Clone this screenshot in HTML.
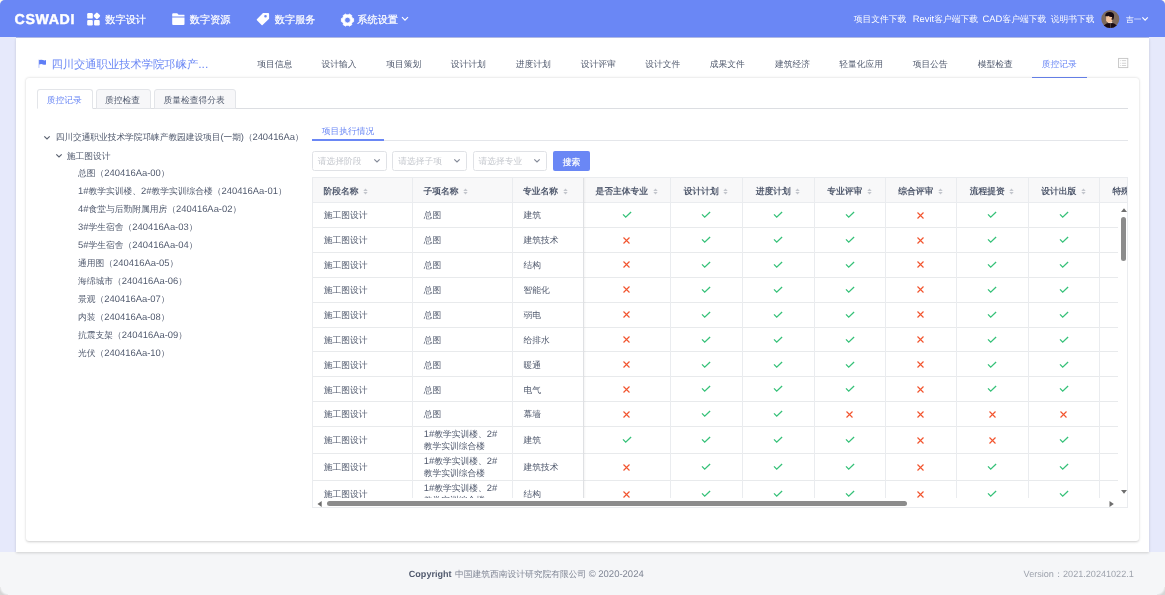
<!DOCTYPE html><html><head><meta charset="utf-8"><style>
*{box-sizing:border-box}
html,body{margin:0;padding:0}
body{width:1165px;height:595px;overflow:hidden;position:relative;background:#f5f6f8;font-family:"Liberation Sans",sans-serif;text-rendering:geometricPrecision}
#wrap{position:absolute;left:0;top:0;width:1165px;height:595px;will-change:transform}
.t{position:absolute;white-space:nowrap;line-height:20px;height:20px}
.ic{position:absolute;display:block}
#hdr{position:absolute;left:0;top:0;width:1165px;height:37px;background:#6a87f5;border-radius:5px 5px 0 0;box-shadow:0 0.5px 1px rgba(40,70,200,0.35)}
#main{position:absolute;left:16px;top:37.5px;width:1133px;height:514.3px;background:#fff;box-shadow:0 0.5px 2.5px rgba(0,0,0,0.16)}
#card{position:absolute;left:26px;top:78px;width:1112.5px;height:462.5px;background:#fff;border-radius:3px;box-shadow:0 0.5px 2.5px rgba(0,0,0,0.2)}
.tab{position:absolute;top:89.2px;height:19.4px;background:#f7f7f9;border:1px solid #e3e5e9;border-radius:3px 3px 0 0}
.sel{position:absolute;top:151.3px;width:74.5px;height:19.5px;border:1px solid #e0e2e6;border-radius:2.5px;background:#fff}
.th{position:absolute;top:3px;height:20px;line-height:20px;white-space:nowrap;font-size:8.75px;font-weight:600;color:#515a6e}
.srt{display:inline-block;width:5px;height:7px;margin-left:4.6px;vertical-align:-0.5px}
.td{position:absolute;height:20px;line-height:20px;white-space:nowrap;font-size:8.75px;color:#515a6e}
.td2{position:absolute;height:25px;line-height:12.5px;white-space:nowrap;font-size:8.75px;color:#515a6e}
.mkw{position:absolute;width:10px;height:9px}
.mk{display:block}
</style></head><body><div id="wrap"><div style="position:absolute;left:0;top:0;width:8px;height:8px;background:#fffdf0"></div>
<div style="position:absolute;left:1157px;top:0;width:8px;height:8px;background:#fffdf0"></div>
<div id="hdr"></div>
<div class="t" style="left:14.6px;top:10px;font-size:14.2px;font-weight:bold;color:#fff;letter-spacing:0.6px;-webkit-text-stroke:0.45px #fff">CSWADI</div>
<svg class="ic" style="left:86px;top:12px" width="16" height="15" viewBox="0 0 16 15">
<rect x="1.2" y="1" width="5.6" height="5.6" rx="1.2" fill="#fff"/>
<rect x="1.2" y="7.9" width="5.6" height="5.6" rx="1.2" fill="#fff"/>
<rect x="8.1" y="7.9" width="5.6" height="5.6" rx="1.2" fill="#fff"/>
<rect x="8.3" y="1.3" width="5.2" height="5.2" rx="1.1" fill="#fff" transform="rotate(45 10.9 3.9)"/>
</svg>
<div class="t" style="left:105.3px;top:10.600000000000001px;font-size:10.2px;color:#fff;font-weight:normal;-webkit-text-stroke:0.2px #fff">数字设计</div>
<svg class="ic" style="left:168px;top:8px" width="22" height="22" viewBox="0 0 22 22">
<path d="M4.2 6.3 Q4.2 5.2 5.3 5.2 H9.2 L10.6 6.8 H16.3 Q16.5 6.8 16.5 7.2 V8.6 H4.2 Z" fill="#fff"/>
<path d="M4.2 9.4 H16.5 V16 Q16.5 17 15.5 17 H5.2 Q4.2 17 4.2 16 Z" fill="#fff"/>
</svg>
<div class="t" style="left:189.8px;top:10.600000000000001px;font-size:10.2px;color:#fff;font-weight:normal;-webkit-text-stroke:0.2px #fff">数字资源</div>
<svg class="ic" style="left:252px;top:8px" width="22" height="22" viewBox="0 0 22 22">
<path d="M11 5 H16.2 Q17.1 5 17.1 5.9 V10.7 L10.6 17 Q10.1 17.4 9.6 17 L4.9 12.2 Q4.5 11.7 4.9 11.2 Z M13.5 7 A1.3 1.3 0 1 0 13.5 9.6 A1.3 1.3 0 1 0 13.5 7 Z" fill="#fff" fill-rule="evenodd"/>
</svg>
<div class="t" style="left:274.8px;top:10.600000000000001px;font-size:10.2px;color:#fff;font-weight:normal;-webkit-text-stroke:0.2px #fff">数字服务</div>
<svg class="ic" style="left:336px;top:8px" width="22" height="22" viewBox="0 0 22 22"><path d="M17.61 10.58 L17.61 13.62 L16.45 14.00 L15.62 15.44 L15.88 16.63 L13.24 18.16 L12.33 17.33 L10.67 17.33 L9.76 18.16 L7.12 16.63 L7.38 15.44 L6.55 14.00 L5.39 13.62 L5.39 10.58 L6.55 10.20 L7.38 8.76 L7.12 7.57 L9.76 6.04 L10.67 6.87 L12.33 6.87 L13.24 6.04 L15.88 7.57 L15.62 8.76 L16.45 10.20 Z M14.40 12.1 A2.9 2.9 0 1 0 8.60 12.1 A2.9 2.9 0 1 0 14.40 12.1 Z" fill="#fff" fill-rule="evenodd" stroke="#fff" stroke-width="0.8" stroke-linejoin="round"/></svg>
<div class="t" style="left:357.3px;top:10.600000000000001px;font-size:10.2px;color:#fff;font-weight:normal;-webkit-text-stroke:0.2px #fff">系统设置</div>
<svg class="ic" style="left:401px;top:16px" width="8" height="6" viewBox="0 0 8 6"><path d="M1 1.2 L4 4.2 L7 1.2" fill="none" stroke="#fff" stroke-width="1.2"/></svg>
<div class="t" style="left:853.8px;top:8.899999999999999px;font-size:8.75px;color:#fff;font-weight:normal;">项目文件下载</div>
<div class="t" style="left:912.8px;top:8.899999999999999px;font-size:8.75px;color:#fff;font-weight:normal;"><span style="font-size:9.41px">Revit</span>客户端下载</div>
<div class="t" style="left:982.5px;top:8.899999999999999px;font-size:8.75px;color:#fff;font-weight:normal;"><span style="font-size:9.41px">CAD</span>客户端下载</div>
<div class="t" style="left:1050.8px;top:8.899999999999999px;font-size:8.75px;color:#fff;font-weight:normal;">说明书下载</div>
<svg class="ic" style="left:1101px;top:10px" width="19" height="19" viewBox="0 0 19 19">
<defs><clipPath id="cav"><circle cx="9.3" cy="9.1" r="9"/></clipPath></defs>
<circle cx="9.3" cy="9.1" r="9" fill="#7d6a5d"/>
<g clip-path="url(#cav)">
<path d="M1.5 19.5 Q2 15 5.5 13.6 Q7.5 12.8 9.3 12.8 Q11.3 12.8 13.2 13.6 Q16.6 15 17.2 19.5 Z" fill="#1b0c14"/>
<rect x="9.1" y="13.2" width="0.6" height="6" fill="#6e6058"/>
<rect x="7.2" y="11.8" width="4" height="1.3" fill="#efe9e2"/>
<path d="M5.1 6 V10.6 Q5.3 12.4 7.5 12.4 L9.8 12.4 Q11 12.2 11.2 10.8 L11.4 6.5 Z" fill="#f3c29c"/>
<path d="M4.2 5.4 Q4.4 2.1 8.6 2 Q12.9 1.9 13.1 5.6 Q13 7.9 12.3 9.6 L11.2 9.2 L11.1 7.1 Q8.6 7.3 7.6 5.8 Q6.3 6.6 4.4 6.2 Z" fill="#150911"/>
<path d="M10.6 8 Q11.8 8 11.9 9 Q11.7 10 10.7 9.9 Z" fill="#2a1a1a"/>
</g></svg>
<div class="t" style="left:1125.9px;top:9.899999999999999px;font-size:7.75px;color:#fff;font-weight:normal;">吉一</div>
<svg class="ic" style="left:1141.4px;top:16px" width="8" height="6" viewBox="0 0 8 6"><path d="M1.4 1.4 L4.1 4.1 L6.8 1.4" fill="none" stroke="#fff" stroke-width="1.2"/></svg>
<div style="position:absolute;left:0;top:37px;width:16px;height:515px;background:#e6e9fb"></div>
<div style="position:absolute;left:1149px;top:37px;width:16px;height:515px;background:#e6e9fb"></div>
<div id="main"></div>
<svg class="ic" style="left:37px;top:58px" width="10" height="11" viewBox="0 0 10 11">
<rect x="1.5" y="1.6" width="0.9" height="8.3" fill="#b4c1f8"/>
<path d="M2.1 2.0 Q4.5 1.3 6 2.1 Q7.6 2.8 9 2.1 V6.4 Q7.6 7.1 6 6.4 Q4.5 5.7 2.1 6.4 Z" fill="#5f7ef6"/>
</svg>
<div class="t" style="left:51.4px;top:53.6px;font-size:11.3px;color:#6a87f5;font-weight:normal;">四川交通职业技术学院邛崃产<span style="font-size:12.15px">...</span></div>
<div class="t" style="left:257.15px;top:53.5px;font-size:8.75px;color:#515a6e;font-weight:normal;">项目信息</div>
<div class="t" style="left:321.54999999999995px;top:53.5px;font-size:8.75px;color:#515a6e;font-weight:normal;">设计输入</div>
<div class="t" style="left:386.34999999999997px;top:53.5px;font-size:8.75px;color:#515a6e;font-weight:normal;">项目策划</div>
<div class="t" style="left:450.65px;top:53.5px;font-size:8.75px;color:#515a6e;font-weight:normal;">设计计划</div>
<div class="t" style="left:515.65px;top:53.5px;font-size:8.75px;color:#515a6e;font-weight:normal;">进度计划</div>
<div class="t" style="left:580.65px;top:53.5px;font-size:8.75px;color:#515a6e;font-weight:normal;">设计评审</div>
<div class="t" style="left:645.15px;top:53.5px;font-size:8.75px;color:#515a6e;font-weight:normal;">设计文件</div>
<div class="t" style="left:709.65px;top:53.5px;font-size:8.75px;color:#515a6e;font-weight:normal;">成果文件</div>
<div class="t" style="left:774.9499999999999px;top:53.5px;font-size:8.75px;color:#515a6e;font-weight:normal;">建筑经济</div>
<div class="t" style="left:839.35px;top:53.5px;font-size:8.75px;color:#515a6e;font-weight:normal;">轻量化应用</div>
<div class="t" style="left:912.65px;top:53.5px;font-size:8.75px;color:#515a6e;font-weight:normal;">项目公告</div>
<div class="t" style="left:977.65px;top:53.5px;font-size:8.75px;color:#515a6e;font-weight:normal;">模型检查</div>
<div class="t" style="left:1041.8500000000001px;top:53.5px;font-size:8.75px;color:#6a87f5;font-weight:normal;">质控记录</div>
<div style="position:absolute;left:1032px;top:77px;width:55px;height:1.6px;background:#6a87f5"></div>
<svg class="ic" style="left:1117px;top:57px" width="12" height="12" viewBox="0 0 12 12">
<rect x="1.6" y="1.4" width="9.2" height="9.2" fill="none" stroke="#c3c3c3" stroke-width="0.9"/>
<rect x="3.2" y="3.3" width="0.9" height="0.8" fill="#d0d0d0"/><rect x="4.9" y="3.3" width="4.2" height="0.8" fill="#c8c8c8"/>
<rect x="3.2" y="5.8" width="0.9" height="0.8" fill="#d0d0d0"/><rect x="4.9" y="5.8" width="4.2" height="0.8" fill="#c8c8c8"/>
<rect x="3.2" y="8.1" width="0.9" height="0.8" fill="#d0d0d0"/><rect x="4.9" y="8.1" width="4.2" height="0.8" fill="#c8c8c8"/>
</svg>
<div id="card"></div>
<div style="position:absolute;left:37px;top:108px;width:1091px;height:1px;background:#dcdee2"></div>
<div class="tab" style="left:36.8px;width:55.8px;background:#fff;border-bottom-color:#fff"></div>
<div class="tab" style="left:95.6px;width:55.3px"></div>
<div class="tab" style="left:154.2px;width:81.5px"></div>
<div class="t" style="left:46.7px;top:89.7px;font-size:8.75px;color:#6a87f5;font-weight:normal;">质控记录</div>
<div class="t" style="left:105px;top:89.7px;font-size:8.75px;color:#515a6e;font-weight:normal;">质控检查</div>
<div class="t" style="left:163.4px;top:89.7px;font-size:8.75px;color:#515a6e;font-weight:normal;">质量检查得分表</div>
<svg class="ic" style="left:43.3px;top:135.2px" width="8" height="6" viewBox="0 0 8 6"><path d="M1.3 1.3 L4 4 L6.7 1.3" fill="none" stroke="#5b6270" stroke-width="1.15"/></svg>
<div class="t" style="left:55.7px;top:127.30000000000001px;font-size:8.75px;color:#515a6e;font-weight:normal;letter-spacing:-0.08px">四川交通职业技术学院邛崃产教园建设项目<span style="font-size:9.41px">(</span>一期<span style="font-size:9.41px">)</span>（<span style="font-size:9.41px">240416Aa</span>）</div>
<svg class="ic" style="left:54.8px;top:153px" width="8" height="6" viewBox="0 0 8 6"><path d="M1.3 1.3 L4 4 L6.7 1.3" fill="none" stroke="#5b6270" stroke-width="1.15"/></svg>
<div class="t" style="left:66.8px;top:145.5px;font-size:8.75px;color:#515a6e;font-weight:normal;">施工图设计</div>
<div class="t" style="left:78px;top:163.2px;font-size:8.75px;color:#515a6e;font-weight:normal;">总图（<span style="font-size:9.41px">240416Aa-00</span>）</div>
<div class="t" style="left:78px;top:181.2px;font-size:8.75px;color:#515a6e;font-weight:normal;"><span style="font-size:9.41px">1#</span>教学实训楼、<span style="font-size:9.41px">2#</span>教学实训综合楼（<span style="font-size:9.41px">240416Aa-01</span>）</div>
<div class="t" style="left:78px;top:199.2px;font-size:8.75px;color:#515a6e;font-weight:normal;"><span style="font-size:9.41px">4#</span>食堂与后勤附属用房（<span style="font-size:9.41px">240416Aa-02</span>）</div>
<div class="t" style="left:78px;top:217.2px;font-size:8.75px;color:#515a6e;font-weight:normal;"><span style="font-size:9.41px">3#</span>学生宿舍（<span style="font-size:9.41px">240416Aa-03</span>）</div>
<div class="t" style="left:78px;top:235.2px;font-size:8.75px;color:#515a6e;font-weight:normal;"><span style="font-size:9.41px">5#</span>学生宿舍（<span style="font-size:9.41px">240416Aa-04</span>）</div>
<div class="t" style="left:78px;top:253.2px;font-size:8.75px;color:#515a6e;font-weight:normal;">通用图（<span style="font-size:9.41px">240416Aa-05</span>）</div>
<div class="t" style="left:78px;top:271.2px;font-size:8.75px;color:#515a6e;font-weight:normal;">海绵城市（<span style="font-size:9.41px">240416Aa-06</span>）</div>
<div class="t" style="left:78px;top:289.2px;font-size:8.75px;color:#515a6e;font-weight:normal;">景观（<span style="font-size:9.41px">240416Aa-07</span>）</div>
<div class="t" style="left:78px;top:307.2px;font-size:8.75px;color:#515a6e;font-weight:normal;">内装（<span style="font-size:9.41px">240416Aa-08</span>）</div>
<div class="t" style="left:78px;top:325.2px;font-size:8.75px;color:#515a6e;font-weight:normal;">抗震支架（<span style="font-size:9.41px">240416Aa-09</span>）</div>
<div class="t" style="left:78px;top:343.2px;font-size:8.75px;color:#515a6e;font-weight:normal;">光伏（<span style="font-size:9.41px">240416Aa-10</span>）</div>
<div class="t" style="left:321.8px;top:120.80000000000001px;font-size:8.75px;color:#6a87f5;font-weight:normal;">项目执行情况</div>
<div style="position:absolute;left:312px;top:140.3px;width:816px;height:1px;background:#e4e6ea"></div>
<div style="position:absolute;left:312px;top:139.3px;width:72px;height:1.7px;background:#6a87f5"></div>
<div class="sel" style="left:312px"></div>
<div class="t" style="left:317.8px;top:151px;font-size:8.75px;color:#c5c8ce;font-weight:normal;">请选择阶段</div>
<svg class="ic" style="left:372.8px;top:158.1px" width="8" height="6" viewBox="0 0 8 6"><path d="M1.3 1.3 L4 4 L6.7 1.3" fill="none" stroke="#858b99" stroke-width="1.2"/></svg>
<div class="sel" style="left:392.4px"></div>
<div class="t" style="left:398.2px;top:151px;font-size:8.75px;color:#c5c8ce;font-weight:normal;">请选择子项</div>
<svg class="ic" style="left:453.2px;top:158.1px" width="8" height="6" viewBox="0 0 8 6"><path d="M1.3 1.3 L4 4 L6.7 1.3" fill="none" stroke="#858b99" stroke-width="1.2"/></svg>
<div class="sel" style="left:472.6px"></div>
<div class="t" style="left:478.40000000000003px;top:151px;font-size:8.75px;color:#c5c8ce;font-weight:normal;">请选择专业</div>
<svg class="ic" style="left:533.4px;top:158.1px" width="8" height="6" viewBox="0 0 8 6"><path d="M1.3 1.3 L4 4 L6.7 1.3" fill="none" stroke="#858b99" stroke-width="1.2"/></svg>
<div style="position:absolute;left:552.8px;top:151.3px;width:37px;height:19.5px;background:#6a87f5;border-radius:2px"></div>
<div class="t" style="left:562.8px;top:151.9px;font-size:8.75px;color:#fff;font-weight:normal;-webkit-text-stroke:0.2px #fff">搜索</div>
<div style="position:absolute;left:312px;top:177px;width:815px;height:329.5px;border:1px solid #e8eaec;border-radius:0"></div>
<div style="position:absolute;left:313px;top:178px;width:814px;height:24px;overflow:hidden;background:#f8f8f9">
<div style="position:absolute;left:99px;top:0px;width:1px;height:24px;background:#eaecef"></div>
<div style="position:absolute;left:198.5px;top:0px;width:1px;height:24px;background:#eaecef"></div>
<div style="position:absolute;left:270px;top:0px;width:1px;height:24px;background:#eaecef"></div>
<div style="position:absolute;left:357px;top:0px;width:1px;height:24px;background:#eaecef"></div>
<div style="position:absolute;left:429px;top:0px;width:1px;height:24px;background:#eaecef"></div>
<div style="position:absolute;left:501px;top:0px;width:1px;height:24px;background:#eaecef"></div>
<div style="position:absolute;left:572px;top:0px;width:1px;height:24px;background:#eaecef"></div>
<div style="position:absolute;left:643px;top:0px;width:1px;height:24px;background:#eaecef"></div>
<div style="position:absolute;left:715px;top:0px;width:1px;height:24px;background:#eaecef"></div>
<div style="position:absolute;left:786px;top:0px;width:1px;height:24px;background:#eaecef"></div>
<div class="th" style="left:10.5px">阶段名称<svg class="srt" width="5" height="7" viewBox="0 0 5 7"><path d="M0.3 2.9 L2.5 0.5 L4.7 2.9 Z M0.3 4.1 L4.7 4.1 L2.5 6.5 Z" fill="#c3c6cd"/></svg></div>
<div class="th" style="left:110.5px">子项名称<svg class="srt" width="5" height="7" viewBox="0 0 5 7"><path d="M0.3 2.9 L2.5 0.5 L4.7 2.9 Z M0.3 4.1 L4.7 4.1 L2.5 6.5 Z" fill="#c3c6cd"/></svg></div>
<div class="th" style="left:210.0px">专业名称<svg class="srt" width="5" height="7" viewBox="0 0 5 7"><path d="M0.3 2.9 L2.5 0.5 L4.7 2.9 Z M0.3 4.1 L4.7 4.1 L2.5 6.5 Z" fill="#c3c6cd"/></svg></div>
<div class="th" style="left:270px;width:87px;text-align:center">是否主体专业<svg class="srt" width="5" height="7" viewBox="0 0 5 7"><path d="M0.3 2.9 L2.5 0.5 L4.7 2.9 Z M0.3 4.1 L4.7 4.1 L2.5 6.5 Z" fill="#c3c6cd"/></svg></div>
<div class="th" style="left:357px;width:72px;text-align:center">设计计划<svg class="srt" width="5" height="7" viewBox="0 0 5 7"><path d="M0.3 2.9 L2.5 0.5 L4.7 2.9 Z M0.3 4.1 L4.7 4.1 L2.5 6.5 Z" fill="#c3c6cd"/></svg></div>
<div class="th" style="left:429px;width:72px;text-align:center">进度计划<svg class="srt" width="5" height="7" viewBox="0 0 5 7"><path d="M0.3 2.9 L2.5 0.5 L4.7 2.9 Z M0.3 4.1 L4.7 4.1 L2.5 6.5 Z" fill="#c3c6cd"/></svg></div>
<div class="th" style="left:501px;width:71px;text-align:center">专业评审<svg class="srt" width="5" height="7" viewBox="0 0 5 7"><path d="M0.3 2.9 L2.5 0.5 L4.7 2.9 Z M0.3 4.1 L4.7 4.1 L2.5 6.5 Z" fill="#c3c6cd"/></svg></div>
<div class="th" style="left:572px;width:71px;text-align:center">综合评审<svg class="srt" width="5" height="7" viewBox="0 0 5 7"><path d="M0.3 2.9 L2.5 0.5 L4.7 2.9 Z M0.3 4.1 L4.7 4.1 L2.5 6.5 Z" fill="#c3c6cd"/></svg></div>
<div class="th" style="left:643px;width:72px;text-align:center">流程提资<svg class="srt" width="5" height="7" viewBox="0 0 5 7"><path d="M0.3 2.9 L2.5 0.5 L4.7 2.9 Z M0.3 4.1 L4.7 4.1 L2.5 6.5 Z" fill="#c3c6cd"/></svg></div>
<div class="th" style="left:715px;width:71px;text-align:center">设计出版<svg class="srt" width="5" height="7" viewBox="0 0 5 7"><path d="M0.3 2.9 L2.5 0.5 L4.7 2.9 Z M0.3 4.1 L4.7 4.1 L2.5 6.5 Z" fill="#c3c6cd"/></svg></div>
<div class="th" style="left:786px;width:71.5px;text-align:center">特殊专业<svg class="srt" width="5" height="7" viewBox="0 0 5 7"><path d="M0.3 2.9 L2.5 0.5 L4.7 2.9 Z M0.3 4.1 L4.7 4.1 L2.5 6.5 Z" fill="#c3c6cd"/></svg></div>
</div>
<div style="position:absolute;left:313px;top:202px;width:814px;height:1px;background:#eaecef"></div>
<div style="position:absolute;left:313px;top:202px;width:805px;height:296px;overflow:hidden">
<div class="td" style="left:10.800000000000011px;top:3.25px">施工图设计</div>
<div class="td" style="left:110.69999999999999px;top:3.25px">总图</div>
<div class="td" style="left:210.39999999999998px;top:3.25px">建筑</div>
<div class="mkw" style="left:308.5px;top:9.149999999999999px"><svg class="mk" width="10" height="8" viewBox="0 0 10 8"><path d="M1 3.4 L3.7 6.2 L9.1 1" fill="none" stroke="#35c178" stroke-width="1.3"/></svg></div>
<div class="mkw" style="left:388.0px;top:9.149999999999999px"><svg class="mk" width="10" height="8" viewBox="0 0 10 8"><path d="M1 3.4 L3.7 6.2 L9.1 1" fill="none" stroke="#35c178" stroke-width="1.3"/></svg></div>
<div class="mkw" style="left:460.0px;top:9.149999999999999px"><svg class="mk" width="10" height="8" viewBox="0 0 10 8"><path d="M1 3.4 L3.7 6.2 L9.1 1" fill="none" stroke="#35c178" stroke-width="1.3"/></svg></div>
<div class="mkw" style="left:531.5px;top:9.149999999999999px"><svg class="mk" width="10" height="8" viewBox="0 0 10 8"><path d="M1 3.4 L3.7 6.2 L9.1 1" fill="none" stroke="#35c178" stroke-width="1.3"/></svg></div>
<div class="mkw" style="left:603.1px;top:8.649999999999999px"><svg class="mk" width="9" height="9" viewBox="0 0 9 9"><path d="M1.5 1.5 L7.5 7.5 M7.5 1.5 L1.5 7.5" fill="none" stroke="#f2552f" stroke-width="1.15"/></svg></div>
<div class="mkw" style="left:674.0px;top:9.149999999999999px"><svg class="mk" width="10" height="8" viewBox="0 0 10 8"><path d="M1 3.4 L3.7 6.2 L9.1 1" fill="none" stroke="#35c178" stroke-width="1.3"/></svg></div>
<div class="mkw" style="left:745.5px;top:9.149999999999999px"><svg class="mk" width="10" height="8" viewBox="0 0 10 8"><path d="M1 3.4 L3.7 6.2 L9.1 1" fill="none" stroke="#35c178" stroke-width="1.3"/></svg></div>
<div style="position:absolute;left:0px;top:24.9px;width:805px;height:1px;background:#e8eaec"></div>
<div class="td" style="left:10.800000000000011px;top:28.149999999999995px">施工图设计</div>
<div class="td" style="left:110.69999999999999px;top:28.149999999999995px">总图</div>
<div class="td" style="left:210.39999999999998px;top:28.149999999999995px">建筑技术</div>
<div class="mkw" style="left:309.1px;top:33.55px"><svg class="mk" width="9" height="9" viewBox="0 0 9 9"><path d="M1.5 1.5 L7.5 7.5 M7.5 1.5 L1.5 7.5" fill="none" stroke="#f2552f" stroke-width="1.15"/></svg></div>
<div class="mkw" style="left:388.0px;top:34.05px"><svg class="mk" width="10" height="8" viewBox="0 0 10 8"><path d="M1 3.4 L3.7 6.2 L9.1 1" fill="none" stroke="#35c178" stroke-width="1.3"/></svg></div>
<div class="mkw" style="left:460.0px;top:34.05px"><svg class="mk" width="10" height="8" viewBox="0 0 10 8"><path d="M1 3.4 L3.7 6.2 L9.1 1" fill="none" stroke="#35c178" stroke-width="1.3"/></svg></div>
<div class="mkw" style="left:531.5px;top:34.05px"><svg class="mk" width="10" height="8" viewBox="0 0 10 8"><path d="M1 3.4 L3.7 6.2 L9.1 1" fill="none" stroke="#35c178" stroke-width="1.3"/></svg></div>
<div class="mkw" style="left:603.1px;top:33.55px"><svg class="mk" width="9" height="9" viewBox="0 0 9 9"><path d="M1.5 1.5 L7.5 7.5 M7.5 1.5 L1.5 7.5" fill="none" stroke="#f2552f" stroke-width="1.15"/></svg></div>
<div class="mkw" style="left:674.0px;top:34.05px"><svg class="mk" width="10" height="8" viewBox="0 0 10 8"><path d="M1 3.4 L3.7 6.2 L9.1 1" fill="none" stroke="#35c178" stroke-width="1.3"/></svg></div>
<div class="mkw" style="left:745.5px;top:34.05px"><svg class="mk" width="10" height="8" viewBox="0 0 10 8"><path d="M1 3.4 L3.7 6.2 L9.1 1" fill="none" stroke="#35c178" stroke-width="1.3"/></svg></div>
<div style="position:absolute;left:0px;top:49.8px;width:805px;height:1px;background:#e8eaec"></div>
<div class="td" style="left:10.800000000000011px;top:53.05px">施工图设计</div>
<div class="td" style="left:110.69999999999999px;top:53.05px">总图</div>
<div class="td" style="left:210.39999999999998px;top:53.05px">结构</div>
<div class="mkw" style="left:309.1px;top:58.45px"><svg class="mk" width="9" height="9" viewBox="0 0 9 9"><path d="M1.5 1.5 L7.5 7.5 M7.5 1.5 L1.5 7.5" fill="none" stroke="#f2552f" stroke-width="1.15"/></svg></div>
<div class="mkw" style="left:388.0px;top:58.95px"><svg class="mk" width="10" height="8" viewBox="0 0 10 8"><path d="M1 3.4 L3.7 6.2 L9.1 1" fill="none" stroke="#35c178" stroke-width="1.3"/></svg></div>
<div class="mkw" style="left:460.0px;top:58.95px"><svg class="mk" width="10" height="8" viewBox="0 0 10 8"><path d="M1 3.4 L3.7 6.2 L9.1 1" fill="none" stroke="#35c178" stroke-width="1.3"/></svg></div>
<div class="mkw" style="left:531.5px;top:58.95px"><svg class="mk" width="10" height="8" viewBox="0 0 10 8"><path d="M1 3.4 L3.7 6.2 L9.1 1" fill="none" stroke="#35c178" stroke-width="1.3"/></svg></div>
<div class="mkw" style="left:603.1px;top:58.45px"><svg class="mk" width="9" height="9" viewBox="0 0 9 9"><path d="M1.5 1.5 L7.5 7.5 M7.5 1.5 L1.5 7.5" fill="none" stroke="#f2552f" stroke-width="1.15"/></svg></div>
<div class="mkw" style="left:674.0px;top:58.95px"><svg class="mk" width="10" height="8" viewBox="0 0 10 8"><path d="M1 3.4 L3.7 6.2 L9.1 1" fill="none" stroke="#35c178" stroke-width="1.3"/></svg></div>
<div class="mkw" style="left:745.5px;top:58.95px"><svg class="mk" width="10" height="8" viewBox="0 0 10 8"><path d="M1 3.4 L3.7 6.2 L9.1 1" fill="none" stroke="#35c178" stroke-width="1.3"/></svg></div>
<div style="position:absolute;left:0px;top:74.69999999999999px;width:805px;height:1px;background:#e8eaec"></div>
<div class="td" style="left:10.800000000000011px;top:77.94999999999999px">施工图设计</div>
<div class="td" style="left:110.69999999999999px;top:77.94999999999999px">总图</div>
<div class="td" style="left:210.39999999999998px;top:77.94999999999999px">智能化</div>
<div class="mkw" style="left:309.1px;top:83.35px"><svg class="mk" width="9" height="9" viewBox="0 0 9 9"><path d="M1.5 1.5 L7.5 7.5 M7.5 1.5 L1.5 7.5" fill="none" stroke="#f2552f" stroke-width="1.15"/></svg></div>
<div class="mkw" style="left:388.0px;top:83.85px"><svg class="mk" width="10" height="8" viewBox="0 0 10 8"><path d="M1 3.4 L3.7 6.2 L9.1 1" fill="none" stroke="#35c178" stroke-width="1.3"/></svg></div>
<div class="mkw" style="left:460.0px;top:83.85px"><svg class="mk" width="10" height="8" viewBox="0 0 10 8"><path d="M1 3.4 L3.7 6.2 L9.1 1" fill="none" stroke="#35c178" stroke-width="1.3"/></svg></div>
<div class="mkw" style="left:531.5px;top:83.85px"><svg class="mk" width="10" height="8" viewBox="0 0 10 8"><path d="M1 3.4 L3.7 6.2 L9.1 1" fill="none" stroke="#35c178" stroke-width="1.3"/></svg></div>
<div class="mkw" style="left:603.1px;top:83.35px"><svg class="mk" width="9" height="9" viewBox="0 0 9 9"><path d="M1.5 1.5 L7.5 7.5 M7.5 1.5 L1.5 7.5" fill="none" stroke="#f2552f" stroke-width="1.15"/></svg></div>
<div class="mkw" style="left:674.0px;top:83.85px"><svg class="mk" width="10" height="8" viewBox="0 0 10 8"><path d="M1 3.4 L3.7 6.2 L9.1 1" fill="none" stroke="#35c178" stroke-width="1.3"/></svg></div>
<div class="mkw" style="left:745.5px;top:83.85px"><svg class="mk" width="10" height="8" viewBox="0 0 10 8"><path d="M1 3.4 L3.7 6.2 L9.1 1" fill="none" stroke="#35c178" stroke-width="1.3"/></svg></div>
<div style="position:absolute;left:0px;top:99.6px;width:805px;height:1px;background:#e8eaec"></div>
<div class="td" style="left:10.800000000000011px;top:102.85px">施工图设计</div>
<div class="td" style="left:110.69999999999999px;top:102.85px">总图</div>
<div class="td" style="left:210.39999999999998px;top:102.85px">弱电</div>
<div class="mkw" style="left:309.1px;top:108.25px"><svg class="mk" width="9" height="9" viewBox="0 0 9 9"><path d="M1.5 1.5 L7.5 7.5 M7.5 1.5 L1.5 7.5" fill="none" stroke="#f2552f" stroke-width="1.15"/></svg></div>
<div class="mkw" style="left:388.0px;top:108.75px"><svg class="mk" width="10" height="8" viewBox="0 0 10 8"><path d="M1 3.4 L3.7 6.2 L9.1 1" fill="none" stroke="#35c178" stroke-width="1.3"/></svg></div>
<div class="mkw" style="left:460.0px;top:108.75px"><svg class="mk" width="10" height="8" viewBox="0 0 10 8"><path d="M1 3.4 L3.7 6.2 L9.1 1" fill="none" stroke="#35c178" stroke-width="1.3"/></svg></div>
<div class="mkw" style="left:531.5px;top:108.75px"><svg class="mk" width="10" height="8" viewBox="0 0 10 8"><path d="M1 3.4 L3.7 6.2 L9.1 1" fill="none" stroke="#35c178" stroke-width="1.3"/></svg></div>
<div class="mkw" style="left:603.1px;top:108.25px"><svg class="mk" width="9" height="9" viewBox="0 0 9 9"><path d="M1.5 1.5 L7.5 7.5 M7.5 1.5 L1.5 7.5" fill="none" stroke="#f2552f" stroke-width="1.15"/></svg></div>
<div class="mkw" style="left:674.0px;top:108.75px"><svg class="mk" width="10" height="8" viewBox="0 0 10 8"><path d="M1 3.4 L3.7 6.2 L9.1 1" fill="none" stroke="#35c178" stroke-width="1.3"/></svg></div>
<div class="mkw" style="left:745.5px;top:108.75px"><svg class="mk" width="10" height="8" viewBox="0 0 10 8"><path d="M1 3.4 L3.7 6.2 L9.1 1" fill="none" stroke="#35c178" stroke-width="1.3"/></svg></div>
<div style="position:absolute;left:0px;top:124.5px;width:805px;height:1px;background:#e8eaec"></div>
<div class="td" style="left:10.800000000000011px;top:127.74999999999999px">施工图设计</div>
<div class="td" style="left:110.69999999999999px;top:127.74999999999999px">总图</div>
<div class="td" style="left:210.39999999999998px;top:127.74999999999999px">给排水</div>
<div class="mkw" style="left:309.1px;top:133.14999999999998px"><svg class="mk" width="9" height="9" viewBox="0 0 9 9"><path d="M1.5 1.5 L7.5 7.5 M7.5 1.5 L1.5 7.5" fill="none" stroke="#f2552f" stroke-width="1.15"/></svg></div>
<div class="mkw" style="left:388.0px;top:133.64999999999998px"><svg class="mk" width="10" height="8" viewBox="0 0 10 8"><path d="M1 3.4 L3.7 6.2 L9.1 1" fill="none" stroke="#35c178" stroke-width="1.3"/></svg></div>
<div class="mkw" style="left:460.0px;top:133.64999999999998px"><svg class="mk" width="10" height="8" viewBox="0 0 10 8"><path d="M1 3.4 L3.7 6.2 L9.1 1" fill="none" stroke="#35c178" stroke-width="1.3"/></svg></div>
<div class="mkw" style="left:531.5px;top:133.64999999999998px"><svg class="mk" width="10" height="8" viewBox="0 0 10 8"><path d="M1 3.4 L3.7 6.2 L9.1 1" fill="none" stroke="#35c178" stroke-width="1.3"/></svg></div>
<div class="mkw" style="left:603.1px;top:133.14999999999998px"><svg class="mk" width="9" height="9" viewBox="0 0 9 9"><path d="M1.5 1.5 L7.5 7.5 M7.5 1.5 L1.5 7.5" fill="none" stroke="#f2552f" stroke-width="1.15"/></svg></div>
<div class="mkw" style="left:674.0px;top:133.64999999999998px"><svg class="mk" width="10" height="8" viewBox="0 0 10 8"><path d="M1 3.4 L3.7 6.2 L9.1 1" fill="none" stroke="#35c178" stroke-width="1.3"/></svg></div>
<div class="mkw" style="left:745.5px;top:133.64999999999998px"><svg class="mk" width="10" height="8" viewBox="0 0 10 8"><path d="M1 3.4 L3.7 6.2 L9.1 1" fill="none" stroke="#35c178" stroke-width="1.3"/></svg></div>
<div style="position:absolute;left:0px;top:149.4px;width:805px;height:1px;background:#e8eaec"></div>
<div class="td" style="left:10.800000000000011px;top:152.65px">施工图设计</div>
<div class="td" style="left:110.69999999999999px;top:152.65px">总图</div>
<div class="td" style="left:210.39999999999998px;top:152.65px">暖通</div>
<div class="mkw" style="left:309.1px;top:158.04999999999998px"><svg class="mk" width="9" height="9" viewBox="0 0 9 9"><path d="M1.5 1.5 L7.5 7.5 M7.5 1.5 L1.5 7.5" fill="none" stroke="#f2552f" stroke-width="1.15"/></svg></div>
<div class="mkw" style="left:388.0px;top:158.54999999999998px"><svg class="mk" width="10" height="8" viewBox="0 0 10 8"><path d="M1 3.4 L3.7 6.2 L9.1 1" fill="none" stroke="#35c178" stroke-width="1.3"/></svg></div>
<div class="mkw" style="left:460.0px;top:158.54999999999998px"><svg class="mk" width="10" height="8" viewBox="0 0 10 8"><path d="M1 3.4 L3.7 6.2 L9.1 1" fill="none" stroke="#35c178" stroke-width="1.3"/></svg></div>
<div class="mkw" style="left:531.5px;top:158.54999999999998px"><svg class="mk" width="10" height="8" viewBox="0 0 10 8"><path d="M1 3.4 L3.7 6.2 L9.1 1" fill="none" stroke="#35c178" stroke-width="1.3"/></svg></div>
<div class="mkw" style="left:603.1px;top:158.04999999999998px"><svg class="mk" width="9" height="9" viewBox="0 0 9 9"><path d="M1.5 1.5 L7.5 7.5 M7.5 1.5 L1.5 7.5" fill="none" stroke="#f2552f" stroke-width="1.15"/></svg></div>
<div class="mkw" style="left:674.0px;top:158.54999999999998px"><svg class="mk" width="10" height="8" viewBox="0 0 10 8"><path d="M1 3.4 L3.7 6.2 L9.1 1" fill="none" stroke="#35c178" stroke-width="1.3"/></svg></div>
<div class="mkw" style="left:745.5px;top:158.54999999999998px"><svg class="mk" width="10" height="8" viewBox="0 0 10 8"><path d="M1 3.4 L3.7 6.2 L9.1 1" fill="none" stroke="#35c178" stroke-width="1.3"/></svg></div>
<div style="position:absolute;left:0px;top:174.3px;width:805px;height:1px;background:#e8eaec"></div>
<div class="td" style="left:10.800000000000011px;top:177.55px">施工图设计</div>
<div class="td" style="left:110.69999999999999px;top:177.55px">总图</div>
<div class="td" style="left:210.39999999999998px;top:177.55px">电气</div>
<div class="mkw" style="left:309.1px;top:182.95px"><svg class="mk" width="9" height="9" viewBox="0 0 9 9"><path d="M1.5 1.5 L7.5 7.5 M7.5 1.5 L1.5 7.5" fill="none" stroke="#f2552f" stroke-width="1.15"/></svg></div>
<div class="mkw" style="left:388.0px;top:183.45px"><svg class="mk" width="10" height="8" viewBox="0 0 10 8"><path d="M1 3.4 L3.7 6.2 L9.1 1" fill="none" stroke="#35c178" stroke-width="1.3"/></svg></div>
<div class="mkw" style="left:460.0px;top:183.45px"><svg class="mk" width="10" height="8" viewBox="0 0 10 8"><path d="M1 3.4 L3.7 6.2 L9.1 1" fill="none" stroke="#35c178" stroke-width="1.3"/></svg></div>
<div class="mkw" style="left:531.5px;top:183.45px"><svg class="mk" width="10" height="8" viewBox="0 0 10 8"><path d="M1 3.4 L3.7 6.2 L9.1 1" fill="none" stroke="#35c178" stroke-width="1.3"/></svg></div>
<div class="mkw" style="left:603.1px;top:182.95px"><svg class="mk" width="9" height="9" viewBox="0 0 9 9"><path d="M1.5 1.5 L7.5 7.5 M7.5 1.5 L1.5 7.5" fill="none" stroke="#f2552f" stroke-width="1.15"/></svg></div>
<div class="mkw" style="left:674.0px;top:183.45px"><svg class="mk" width="10" height="8" viewBox="0 0 10 8"><path d="M1 3.4 L3.7 6.2 L9.1 1" fill="none" stroke="#35c178" stroke-width="1.3"/></svg></div>
<div class="mkw" style="left:745.5px;top:183.45px"><svg class="mk" width="10" height="8" viewBox="0 0 10 8"><path d="M1 3.4 L3.7 6.2 L9.1 1" fill="none" stroke="#35c178" stroke-width="1.3"/></svg></div>
<div style="position:absolute;left:0px;top:199.20000000000002px;width:805px;height:1px;background:#e8eaec"></div>
<div class="td" style="left:10.800000000000011px;top:202.45000000000002px">施工图设计</div>
<div class="td" style="left:110.69999999999999px;top:202.45000000000002px">总图</div>
<div class="td" style="left:210.39999999999998px;top:202.45000000000002px">幕墙</div>
<div class="mkw" style="left:309.1px;top:207.85px"><svg class="mk" width="9" height="9" viewBox="0 0 9 9"><path d="M1.5 1.5 L7.5 7.5 M7.5 1.5 L1.5 7.5" fill="none" stroke="#f2552f" stroke-width="1.15"/></svg></div>
<div class="mkw" style="left:388.0px;top:208.35px"><svg class="mk" width="10" height="8" viewBox="0 0 10 8"><path d="M1 3.4 L3.7 6.2 L9.1 1" fill="none" stroke="#35c178" stroke-width="1.3"/></svg></div>
<div class="mkw" style="left:460.0px;top:208.35px"><svg class="mk" width="10" height="8" viewBox="0 0 10 8"><path d="M1 3.4 L3.7 6.2 L9.1 1" fill="none" stroke="#35c178" stroke-width="1.3"/></svg></div>
<div class="mkw" style="left:532.1px;top:207.85px"><svg class="mk" width="9" height="9" viewBox="0 0 9 9"><path d="M1.5 1.5 L7.5 7.5 M7.5 1.5 L1.5 7.5" fill="none" stroke="#f2552f" stroke-width="1.15"/></svg></div>
<div class="mkw" style="left:603.1px;top:207.85px"><svg class="mk" width="9" height="9" viewBox="0 0 9 9"><path d="M1.5 1.5 L7.5 7.5 M7.5 1.5 L1.5 7.5" fill="none" stroke="#f2552f" stroke-width="1.15"/></svg></div>
<div class="mkw" style="left:674.6px;top:207.85px"><svg class="mk" width="9" height="9" viewBox="0 0 9 9"><path d="M1.5 1.5 L7.5 7.5 M7.5 1.5 L1.5 7.5" fill="none" stroke="#f2552f" stroke-width="1.15"/></svg></div>
<div class="mkw" style="left:746.1px;top:207.85px"><svg class="mk" width="9" height="9" viewBox="0 0 9 9"><path d="M1.5 1.5 L7.5 7.5 M7.5 1.5 L1.5 7.5" fill="none" stroke="#f2552f" stroke-width="1.15"/></svg></div>
<div style="position:absolute;left:0px;top:224.10000000000002px;width:805px;height:1px;background:#e8eaec"></div>
<div class="td" style="left:10.800000000000011px;top:228.35000000000002px">施工图设计</div>
<div class="td2" style="left:110.69999999999999px;top:225.85000000000002px"><span style="font-size:9.41px">1#</span>教学实训楼、<span style="font-size:9.41px">2#</span><br>教学实训综合楼</div>
<div class="td" style="left:210.39999999999998px;top:228.35000000000002px">建筑</div>
<div class="mkw" style="left:308.5px;top:234.25px"><svg class="mk" width="10" height="8" viewBox="0 0 10 8"><path d="M1 3.4 L3.7 6.2 L9.1 1" fill="none" stroke="#35c178" stroke-width="1.3"/></svg></div>
<div class="mkw" style="left:388.0px;top:234.25px"><svg class="mk" width="10" height="8" viewBox="0 0 10 8"><path d="M1 3.4 L3.7 6.2 L9.1 1" fill="none" stroke="#35c178" stroke-width="1.3"/></svg></div>
<div class="mkw" style="left:460.0px;top:234.25px"><svg class="mk" width="10" height="8" viewBox="0 0 10 8"><path d="M1 3.4 L3.7 6.2 L9.1 1" fill="none" stroke="#35c178" stroke-width="1.3"/></svg></div>
<div class="mkw" style="left:531.5px;top:234.25px"><svg class="mk" width="10" height="8" viewBox="0 0 10 8"><path d="M1 3.4 L3.7 6.2 L9.1 1" fill="none" stroke="#35c178" stroke-width="1.3"/></svg></div>
<div class="mkw" style="left:603.1px;top:233.75px"><svg class="mk" width="9" height="9" viewBox="0 0 9 9"><path d="M1.5 1.5 L7.5 7.5 M7.5 1.5 L1.5 7.5" fill="none" stroke="#f2552f" stroke-width="1.15"/></svg></div>
<div class="mkw" style="left:674.6px;top:233.75px"><svg class="mk" width="9" height="9" viewBox="0 0 9 9"><path d="M1.5 1.5 L7.5 7.5 M7.5 1.5 L1.5 7.5" fill="none" stroke="#f2552f" stroke-width="1.15"/></svg></div>
<div class="mkw" style="left:745.5px;top:234.25px"><svg class="mk" width="10" height="8" viewBox="0 0 10 8"><path d="M1 3.4 L3.7 6.2 L9.1 1" fill="none" stroke="#35c178" stroke-width="1.3"/></svg></div>
<div style="position:absolute;left:0px;top:251.00000000000003px;width:805px;height:1px;background:#e8eaec"></div>
<div class="td" style="left:10.800000000000011px;top:255.25000000000006px">施工图设计</div>
<div class="td2" style="left:110.69999999999999px;top:252.75000000000006px"><span style="font-size:9.41px">1#</span>教学实训楼、<span style="font-size:9.41px">2#</span><br>教学实训综合楼</div>
<div class="td" style="left:210.39999999999998px;top:255.25000000000006px">建筑技术</div>
<div class="mkw" style="left:309.1px;top:260.65000000000003px"><svg class="mk" width="9" height="9" viewBox="0 0 9 9"><path d="M1.5 1.5 L7.5 7.5 M7.5 1.5 L1.5 7.5" fill="none" stroke="#f2552f" stroke-width="1.15"/></svg></div>
<div class="mkw" style="left:388.0px;top:261.15000000000003px"><svg class="mk" width="10" height="8" viewBox="0 0 10 8"><path d="M1 3.4 L3.7 6.2 L9.1 1" fill="none" stroke="#35c178" stroke-width="1.3"/></svg></div>
<div class="mkw" style="left:460.0px;top:261.15000000000003px"><svg class="mk" width="10" height="8" viewBox="0 0 10 8"><path d="M1 3.4 L3.7 6.2 L9.1 1" fill="none" stroke="#35c178" stroke-width="1.3"/></svg></div>
<div class="mkw" style="left:531.5px;top:261.15000000000003px"><svg class="mk" width="10" height="8" viewBox="0 0 10 8"><path d="M1 3.4 L3.7 6.2 L9.1 1" fill="none" stroke="#35c178" stroke-width="1.3"/></svg></div>
<div class="mkw" style="left:603.1px;top:260.65000000000003px"><svg class="mk" width="9" height="9" viewBox="0 0 9 9"><path d="M1.5 1.5 L7.5 7.5 M7.5 1.5 L1.5 7.5" fill="none" stroke="#f2552f" stroke-width="1.15"/></svg></div>
<div class="mkw" style="left:674.0px;top:261.15000000000003px"><svg class="mk" width="10" height="8" viewBox="0 0 10 8"><path d="M1 3.4 L3.7 6.2 L9.1 1" fill="none" stroke="#35c178" stroke-width="1.3"/></svg></div>
<div class="mkw" style="left:745.5px;top:261.15000000000003px"><svg class="mk" width="10" height="8" viewBox="0 0 10 8"><path d="M1 3.4 L3.7 6.2 L9.1 1" fill="none" stroke="#35c178" stroke-width="1.3"/></svg></div>
<div style="position:absolute;left:0px;top:277.90000000000003px;width:805px;height:1px;background:#e8eaec"></div>
<div class="td" style="left:10.800000000000011px;top:282.15000000000003px">施工图设计</div>
<div class="td2" style="left:110.69999999999999px;top:279.65000000000003px"><span style="font-size:9.41px">1#</span>教学实训楼、<span style="font-size:9.41px">2#</span><br>教学实训综合楼</div>
<div class="td" style="left:210.39999999999998px;top:282.15000000000003px">结构</div>
<div class="mkw" style="left:309.1px;top:287.55px"><svg class="mk" width="9" height="9" viewBox="0 0 9 9"><path d="M1.5 1.5 L7.5 7.5 M7.5 1.5 L1.5 7.5" fill="none" stroke="#f2552f" stroke-width="1.15"/></svg></div>
<div class="mkw" style="left:388.0px;top:288.05px"><svg class="mk" width="10" height="8" viewBox="0 0 10 8"><path d="M1 3.4 L3.7 6.2 L9.1 1" fill="none" stroke="#35c178" stroke-width="1.3"/></svg></div>
<div class="mkw" style="left:460.0px;top:288.05px"><svg class="mk" width="10" height="8" viewBox="0 0 10 8"><path d="M1 3.4 L3.7 6.2 L9.1 1" fill="none" stroke="#35c178" stroke-width="1.3"/></svg></div>
<div class="mkw" style="left:531.5px;top:288.05px"><svg class="mk" width="10" height="8" viewBox="0 0 10 8"><path d="M1 3.4 L3.7 6.2 L9.1 1" fill="none" stroke="#35c178" stroke-width="1.3"/></svg></div>
<div class="mkw" style="left:603.1px;top:287.55px"><svg class="mk" width="9" height="9" viewBox="0 0 9 9"><path d="M1.5 1.5 L7.5 7.5 M7.5 1.5 L1.5 7.5" fill="none" stroke="#f2552f" stroke-width="1.15"/></svg></div>
<div class="mkw" style="left:674.0px;top:288.05px"><svg class="mk" width="10" height="8" viewBox="0 0 10 8"><path d="M1 3.4 L3.7 6.2 L9.1 1" fill="none" stroke="#35c178" stroke-width="1.3"/></svg></div>
<div class="mkw" style="left:745.5px;top:288.05px"><svg class="mk" width="10" height="8" viewBox="0 0 10 8"><path d="M1 3.4 L3.7 6.2 L9.1 1" fill="none" stroke="#35c178" stroke-width="1.3"/></svg></div>
<div style="position:absolute;left:0px;top:304.8px;width:805px;height:1px;background:#e8eaec"></div>
<div style="position:absolute;left:99px;top:0px;width:1px;height:296px;background:#eaecef"></div>
<div style="position:absolute;left:198.5px;top:0px;width:1px;height:296px;background:#eaecef"></div>
<div style="position:absolute;left:270px;top:0px;width:1px;height:296px;background:#eaecef"></div>
<div style="position:absolute;left:357px;top:0px;width:1px;height:296px;background:#eaecef"></div>
<div style="position:absolute;left:429px;top:0px;width:1px;height:296px;background:#eaecef"></div>
<div style="position:absolute;left:501px;top:0px;width:1px;height:296px;background:#eaecef"></div>
<div style="position:absolute;left:572px;top:0px;width:1px;height:296px;background:#eaecef"></div>
<div style="position:absolute;left:643px;top:0px;width:1px;height:296px;background:#eaecef"></div>
<div style="position:absolute;left:715px;top:0px;width:1px;height:296px;background:#eaecef"></div>
<div style="position:absolute;left:786px;top:0px;width:1px;height:296px;background:#eaecef"></div>
</div>
<div style="position:absolute;left:583px;top:178px;width:3px;height:320px;background:linear-gradient(90deg,rgba(0,0,0,0.06),rgba(0,0,0,0))"></div>
<div style="position:absolute;left:1118px;top:203px;width:9px;height:295px;background:#fff"></div>
<svg class="ic" style="left:1119.5px;top:206.5px" width="8" height="6" viewBox="0 0 8 6"><path d="M4 1.3 L7 5 L1 5 Z" fill="#6e6e6e"/></svg>
<div style="position:absolute;left:1120.6px;top:217.3px;width:5.6px;height:44px;border-radius:3px;background:#8c8c8c"></div>
<svg class="ic" style="left:1119.5px;top:489px" width="8" height="6" viewBox="0 0 8 6"><path d="M1 1 L7 1 L4 4.7 Z" fill="#6e6e6e"/></svg>
<div style="position:absolute;left:313px;top:498px;width:814px;height:9px;background:#fff"></div>
<svg class="ic" style="left:316px;top:500px" width="7" height="8" viewBox="0 0 7 8"><path d="M1.5 4 L5.7 1 L5.7 7 Z" fill="#6e6e6e"/></svg>
<div style="position:absolute;left:326.9px;top:500.8px;width:580.5px;height:5.7px;border-radius:3px;background:#8c8c8c"></div>
<svg class="ic" style="left:1108px;top:500px" width="7" height="8" viewBox="0 0 7 8"><path d="M5.8 4 L1.5 1 L1.5 7 Z" fill="#6e6e6e"/></svg>
<div style="position:absolute;left:312px;top:177px;width:816px;height:1px;background:#eaecef"></div>
<div style="position:absolute;left:312px;top:177px;width:1px;height:330px;background:#eaecef"></div>
<div style="position:absolute;left:1127px;top:177px;width:1px;height:330px;background:#eaecef"></div>
<div style="position:absolute;left:312px;top:506.5px;width:816px;height:1px;background:#eaecef"></div>
<div style="position:absolute;left:0;top:587px;width:8px;height:8px;background:radial-gradient(circle at 8px 0px,#f5f6f8 6.5px,#d6d6d6 9px)"></div>
<div style="position:absolute;left:1157px;top:587px;width:8px;height:8px;background:radial-gradient(circle at 0px 0px,#f5f6f8 6.5px,#d6d6d6 9px)"></div>
<div class="t" style="left:408.8px;top:563.6px;font-size:8.75px;color:#808695"><b style="color:#515a6e;font-size:9.05px">Copyright</b> <span style="margin-left:1px">中国建筑西南设计研究院有限公司</span> <span style="font-size:9.5px">© 2020-2024</span></div>
<div class="t" style="left:1023.6px;top:563.6px;font-size:9.1px;color:#9ea3ad">Version：2021.20241022.1</div></div></body></html>
